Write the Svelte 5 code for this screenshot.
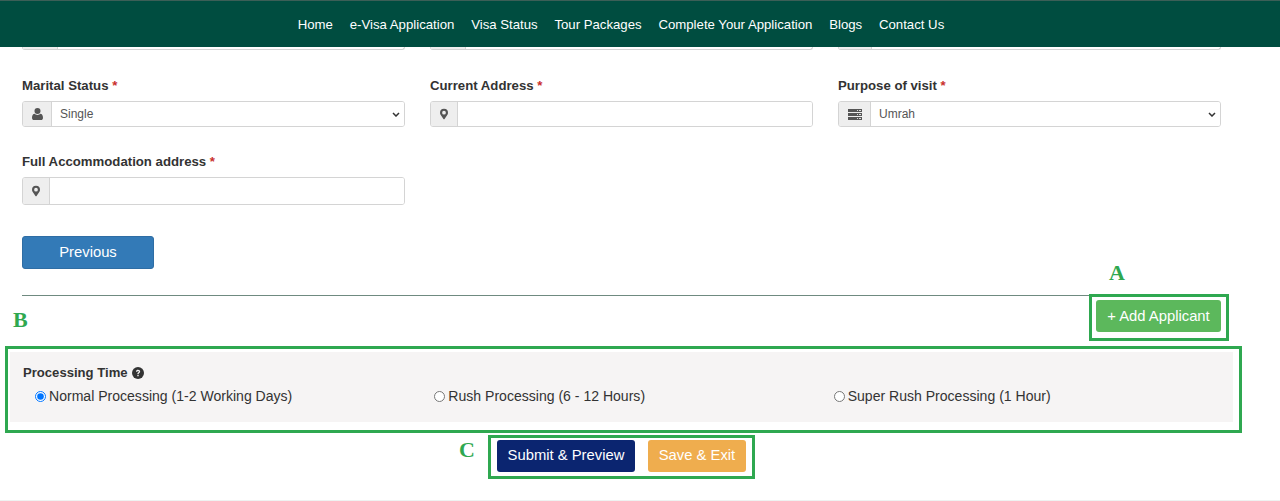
<script>
  const links = ['Home', 'e-Visa Application', 'Visa Status', 'Tour Packages', 'Complete Your Application', 'Blogs', 'Contact Us'];
  const times = ['Normal Processing (1-2 Working Days)', 'Rush Processing (6 - 12 Hours)', 'Super Rush Processing (1 Hour)'];
</script>

{#snippet pin()}
  <svg class="ico" viewBox="0 0 12 16" width="8" height="12"><path fill="#555" fill-rule="evenodd" d="M6 0a6 6 0 0 0-6 6c0 1.3.4 2.2.9 3.2L4.900 15c.3.6.8 1 1.100 1s.8-.4 1.100-1l4-5.800c.5-1 .9-1.900.9-3.200a6 6 0 0 0-6-6Zm0 3.200a2.800 2.800 0 1 1 0 5.600 2.800 2.800 0 0 1 0-5.600Z"/></svg>
{/snippet}
{#snippet user()}
  <svg class="ico" viewBox="0 0 12 13" width="11" height="12"><path fill="#555" d="M6 0a3.300 3.300 0 1 1 0 6.600A3.300 3.300 0 0 1 6 0ZM2.800 6.200C3.600 7 4.700 7.500 6 7.500s2.400-.5 3.200-1.300c1.800.2 2.800 1.800 2.800 4.300 0 1.500-.9 2.500-2.300 2.500H2.300C.9 13 0 12 0 10.500c0-2.500 1-4.100 2.800-4.300Z"/></svg>
{/snippet}
{#snippet server()}
  <svg class="ico" viewBox="0 0 14 11" width="14" height="11"><path fill="#555" d="M0 0h14v3H0zM0 4h14v3H0zM0 8h14v3H0z"/><path fill="#ddd" d="M9 1h1v1H9zM11 1h2v1h-2zM9 5h1v1H9zM11 5h2v1h-2zM9 9h1v1H9zM11 9h2v1h-2z"/></svg>
{/snippet}

<div class="page">
  <nav class="nav">
    {#each links as link}<a href="#top">{link}</a>{/each}
  </nav>

  <main class="wrap">
    <div class="clip">
      <div class="stub"><span class="stub-add s35"></span></div>
      <div class="stub"><span class="stub-add s28"></span></div>
      <div class="stub"><span class="stub-add s33"></span></div>
    </div>

    <div class="row first">
      <div class="field">
        <label for="ms">Marital Status <b>*</b></label>
        <div class="group">
          <span class="addon w30">{@render user()}</span>
          <select id="ms"><option>Single</option></select>
        </div>
      </div>
      <div class="field">
        <label for="ca">Current Address <b>*</b></label>
        <div class="group">
          <span class="addon w28">{@render pin()}</span>
          <input id="ca" />
        </div>
      </div>
      <div class="field">
        <label for="pv">Purpose of visit <b>*</b></label>
        <div class="group">
          <span class="addon w33">{@render server()}</span>
          <select id="pv"><option>Umrah</option></select>
        </div>
      </div>
    </div>

    <div class="row second">
      <div class="field">
        <label for="fa">Full Accommodation address <b>*</b></label>
        <div class="group tall">
          <span class="addon w28">{@render pin()}</span>
          <input id="fa" />
        </div>
      </div>
    </div>

    <button class="btn prev">Previous</button>
    <hr />
    <div class="add-row"><button class="btn add">+ Add Applicant</button></div>

    <section class="panel">
      <div class="title">Processing Time
        <svg viewBox="0 0 16 16" width="12" height="12"><circle cx="8" cy="8" r="8" fill="#333"/><path d="M5.300 6.200C5.400 4.600 6.500 3.700 8.100 3.700c1.600 0 2.800 1 2.800 2.300 0 1.900-2 1.900-2 3.300H7.100c0-2.200 2-2.200 2-3.300 0-.5-.4-.8-1-.8-.7 0-1 .4-1.100 1ZM7.100 10.300h1.800v1.900H7.100Z" fill="#f5f3f3"/></svg>
      </div>
      <div class="radios">
        {#each times as t, i}
          <label class="radio"><input type="radio" name="pt" checked={i === 0} />{t}</label>
        {/each}
      </div>
    </section>

    <div class="actions">
      <button class="btn submit">Submit &amp; Preview</button>
      <button class="btn save">Save &amp; Exit</button>
    </div>
  </main>
  <div class="foot"></div>

  <div class="mark box-a"></div>
  <div class="mark box-b"></div>
  <div class="mark box-c"></div>
  <span class="letter la">A</span>
  <span class="letter lb">B</span>
  <span class="letter lc">C</span>
</div>

<style>
  :global(body) { margin: 0; background: #fff; }
  .page {
    position: relative;
    height: 501px;
    overflow: hidden;
    font-family: "Liberation Sans", Arial, sans-serif;
    color: #333;
  }
  .nav {
    position: relative;
    z-index: 1;
    height: 46px;
    border-top: 1px solid #3c5f57;
    background: #004d40;
    display: flex;
    justify-content: center;
    align-items: center;
    gap: 16.800px;
    padding-right: 38px;
    box-sizing: content-box;
  }
  .nav a {
    color: #fff;
    font-size: 13.200px;
    text-decoration: none;
  }
  .wrap {
    width: 1199px;
    margin-left: 22px;
  }
  .clip {
    height: 3px;
    display: grid;
    grid-template-columns: repeat(3, 383px);
    gap: 25px;
  }
  .stub {
    border: 1px solid #d4d4d4;
    border-top: 0;
    border-radius: 0 0 3px 3px;
    box-sizing: border-box;
    height: 3px;
  }
  .stub-add { display: block; height: 2px; border-right: 1px solid #d4d4d4; background: #eee; }
  .s35 { width: 34px; }
  .s28 { width: 34px; }
  .s33 { width: 32px; }
  .row {
    display: grid;
    grid-template-columns: repeat(3, 383px);
    gap: 25px;
  }
  .first { margin-top: 25px; }
  .second { margin-top: 24px; }
  label {
    display: block;
    font-size: 13.200px;
    font-weight: 700;
    line-height: 20px;
    padding-top: 1px;
    margin-bottom: 5px;
    color: #333;
  }
  label b { color: #c9302c; }
  .group {
    display: flex;
    height: 26px;
    box-sizing: border-box;
    border: 1px solid #d4d4d4;
    border-radius: 3px;
    overflow: hidden;
  }
  .tall { height: 28px; }
  .addon {
    flex: none;
    display: flex;
    align-items: center;
    justify-content: center;
    background: #eee;
    border-right: 1px solid #d4d4d4;
    box-sizing: border-box;
  }
  .w30 { width: 29px; }
  .w28 { width: 27px; }
  .w33 { width: 32px; }
  .ico { display: block; }
  select, .group input {
    flex: 1;
    min-width: 0;
    border: 0;
    outline: 0;
    color: #555;
    font: 12px "Liberation Sans", Arial, sans-serif;
    padding: 0 8px;
    margin: 0;
    height: 100%;
    background-color: #fff;
  }
  select {
    appearance: none;
    background-image: url("data:image/svg+xml,%3Csvg xmlns='http://www.w3.org/2000/svg' width='8' height='5'%3E%3Cpath d='M1 1l3 3 3-3' fill='none' stroke='%23333' stroke-width='1.500'/%3E%3C/svg%3E");
    background-repeat: no-repeat;
    background-position: right 4px center;
  }
  .btn {
    display: block;
    border: 1px solid transparent;
    border-radius: 3px;
    color: #fff;
    font: 14.800px "Liberation Sans", Arial, sans-serif;
    padding: 0 0 2px;
    cursor: pointer;
  }
  .prev {
    margin-top: 31px;
    width: 132px;
    height: 33px;
    background: #337ab7;
    border-color: #2e6da4;
  }
  hr {
    border: 0;
    height: 1px;
    background: #6f8a80;
    margin: 26px 0 0;
  }
  .add-row {
    display: flex;
    justify-content: flex-end;
    margin-top: 4px;
  }
  .add { width: 125px; height: 32px; background: #5cb85c; padding-bottom: 0; }
  .panel {
    margin: 20px -12px 0;
    height: 70px;
    box-sizing: border-box;
    padding: 11px 12px 0 13px;
    background: #f6f4f4;
  }
  .title {
    font-size: 13.100px;
    font-weight: 700;
    line-height: 20px;
    display: flex;
    align-items: center;
    gap: 4px;
  }
  .radios {
    margin-top: 3px;
    padding-left: 12px;
    display: grid;
    grid-template-columns: repeat(3, 399.330px);
  }
  .radio {
    margin: 0;
    padding: 0;
    display: flex;
    align-items: center;
    font-weight: 400;
    font-size: 14.050px;
    color: #333;
  }
  .radio input {
    width: 11px;
    height: 11px;
    margin: 0 3px 0 0;
    flex: none;
  }
  .actions {
    display: flex;
    justify-content: center;
    gap: 13px;
    margin-top: 18px;
  }
  .submit { width: 138px; height: 32px; background: #0b2570; }
  .save { width: 98px; height: 32px; background: #efad4e; }
  .foot {
    margin-top: 28px;
    height: 1px;
    background: #eef2f1;
  }
  .mark {
    position: absolute;
    box-sizing: border-box;
    border: 3px solid #2fa850;
    pointer-events: none;
  }
  .box-a { left: 1089px; top: 294px; width: 140px; height: 47px; }
  .box-b { left: 5px; top: 346px; width: 1237px; height: 87px; border-width: 3.500px; }
  .box-c { left: 488px; top: 435px; width: 267px; height: 44px; }
  .letter {
    position: absolute;
    font: 700 22px/24px "Liberation Serif", serif;
    color: #2fa850;
  }
  .la { left: 1109px; top: 261px; }
  .lb { left: 13px; top: 308px; }
  .lc { left: 459px; top: 438px; }
</style>
